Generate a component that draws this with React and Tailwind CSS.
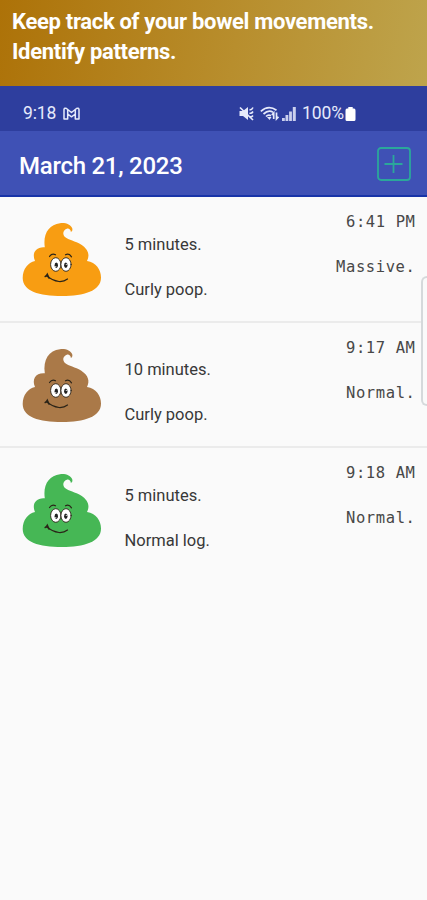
import React from 'react';

const entries = [
  { id: 1, color: '#f89d12', duration: '5 minutes.', type: 'Curly poop.', time: '6:41 PM', size: 'Massive.' },
  { id: 2, color: '#aa7948', duration: '10 minutes.', type: 'Curly poop.', time: '9:17 AM', size: 'Normal.' },
  { id: 3, color: '#46b755', duration: '5 minutes.', type: 'Normal log.', time: '9:18 AM', size: 'Normal.' },
];

const PoopIcon = ({ color }) => (
  <svg className="h-[75px] w-20 shrink-0" viewBox="0 0 80 75" fill="none">
    <path
      fill={color}
      d="M38 1.200C43.500 .5 49 2.500 50.300 6.500C50.700 8.500 50 9.500 48.900 10C48.800 7.500 46.500 6 44.800 6.800C40.500 8.500 40.500 12.500 43 15C46.500 18 53.500 19 59 22.500C66.500 27.500 68 33 65 39C74 40.500 79 47.500 79 55.500C79 69 62 74 40 74C17 74 .7 69 .7 56C.7 47 6 40.500 13 39C9.500 31 14 24.500 22.800 25.300C20.800 11.500 27 2.500 38 1.200Z"
    />
    <g stroke="#2b2418" strokeLinecap="round">
      <ellipse cx="33.800" cy="42.500" rx="5.200" ry="6.800" fill="#fff" strokeWidth="0.900" />
      <ellipse cx="44" cy="42.500" rx="5.100" ry="6.800" fill="#fff" strokeWidth="0.900" />
      <path strokeWidth="1.200" d="M27.500 34.500Q30 31 33.500 32.800M43.500 32.800Q47 31 49.500 34.800" />
      <path strokeWidth="1.200" d="M24.300 53.500Q30 58.500 37 59.500Q42 59.800 45.500 57" />
      <path strokeWidth="1.600" d="M23.200 54.500Q24.500 54 25.300 52.300L27 56" />
    </g>
    <ellipse cx="34.300" cy="43.300" rx="1.700" ry="2.800" fill="#222" />
    <ellipse cx="43.800" cy="43.300" rx="1.700" ry="2.800" fill="#222" />
    <circle cx="33.800" cy="44.500" r="0.600" fill="#fff" />
    <circle cx="44.300" cy="42.300" r="0.600" fill="#fff" />
  </svg>
);

const StatusBar = () => (
  <div className="flex h-[45px] items-center bg-[#2e3e9e] pl-[23px] pt-2.5 text-[17.5px] text-[#e6eafb]">
    <span className="w-[35px] tracking-[-0.1px]">9:18</span>
    <svg className="ml-[5px] h-[13px] w-[17px]" viewBox="0 0 17 13" fill="none" stroke="currentColor" strokeWidth="1.500" strokeLinejoin="round">
      <path d="M1 12V2.500Q1.500 .6 3.500 1.500L8.500 5.500L13.500 1.500Q15.500 .6 16 2.500V12H12.300V7L8.500 9.800L4.700 7V12ZM4.700 2.500V7M12.300 2.500V7" />
    </svg>
    <div className="ml-[159px] flex items-center">
      <svg className="h-[15px] w-[15px]" viewBox="0 0 15 15" fill="none" stroke="currentColor">
        <path fill="currentColor" stroke="none" d="M.5 5H4L9 1V14L4 10H.5Z" />
        <path strokeWidth="1.600" d="M10.500 3.500Q12.500 4.500 14 1.500M10.500 7Q12.500 8 14 5.500M11 10.500Q12.500 11.500 14 9.500" />
        <path strokeWidth="1.700" d="M1 1.500L14 14" />
      </svg>
      <svg className="ml-[6px] h-[15px] w-[19px]" viewBox="0 0 19 15" fill="none" stroke="currentColor" strokeWidth="1.700">
        <path d="M.8 5.300Q8.500-1.500 16.500 4.300M3.500 8Q8.500 3.500 13 6.300M6 10.500Q8.500 8 11 9.800" />
        <path fill="currentColor" stroke="none" d="M7 11H11.500L9.500 14Z" />
        <path d="M13.700 13V7L11.800 9M16.500 6.500V12.800L18.400 10.800" />
      </svg>
      <svg className="ml-[3px] h-3.5 w-3.5" viewBox="0 0 14 14" fill="currentColor">
        <path d="M0 11H2.800V14H0ZM3.500 8H6.300V14H3.500ZM7.100 4.500H9.900V14H7.100ZM10.800 0H13.800V14H10.800Z" opacity="0.850" />
      </svg>
      <span className="ml-[6px] w-[43px] whitespace-nowrap tracking-[-0.1px]">100%</span>
      <svg className="h-3.5 w-[11px]" viewBox="0 0 11 14" fill="#fff">
        <path d="M3.300 0H7.700V1.500H9Q10.500 1.500 10.500 3.500V12.500Q10.500 14 9 14H2Q.5 14 .5 12.500V3.500Q.5 1.500 2 1.500H3.300Z" />
      </svg>
    </div>
  </div>
);

const EntryRow = ({ entry }) => (
  <li className="flex h-[125.5px] border-b-2 border-[#ebebeb] pl-[22px] last:border-transparent">
    <div className="pt-[25px]">
      <PoopIcon color={entry.color} />
    </div>
    <div className="ml-[22.5px] flex flex-col gap-[21px] pt-[35.5px] text-[16.5px] leading-6 text-[#383838]">
      <span>{entry.duration}</span>
      <span>{entry.type}</span>
    </div>
    <div className="ml-auto flex flex-col items-end gap-[21px] pr-[11.5px] pt-[13px] font-['DejaVu_Sans_Mono',monospace] text-[15.5px] leading-6 tracking-[0.6px] text-[#484848]">
      <span>{entry.time}</span>
      <span>{entry.size}</span>
    </div>
  </li>
);

const App = () => {
  return (
    <div className="relative h-[900px] w-[427px] overflow-hidden bg-[#fafafa] font-[Roboto,sans-serif]">
      <div className="h-[86px] bg-linear-[100deg,#ad7208,#b88e2d_55%,#bea44c] pl-3 pt-[7px]">
        <h1 className="whitespace-nowrap text-[22px] font-bold leading-[30px] tracking-[-0.31px] text-white">
          Keep track of your bowel movements.
          <br />
          Identify patterns.
        </h1>
      </div>

      <StatusBar />

      <header className="flex h-[66px] items-center justify-between border-b-2 border-[#1834a8] bg-[#3f51b5] pl-[19px] pr-4 pt-0.5">
        <h2 className="pt-[3px] text-[24px] font-medium tracking-[-0.26px] text-white">March 21, 2023</h2>
        <button aria-label="Add entry">
          <svg className="h-[34px] w-[34px]" viewBox="0 0 34 34" fill="none" stroke="#2ba79b" strokeWidth="1.800">
            <rect x="1" y="1" width="32" height="32" rx="3" />
            <path d="M16.500 8V26M7.500 17H25.500" />
          </svg>
        </button>
      </header>

      <ul>
        {entries.map((entry) => (
          <EntryRow key={entry.id} entry={entry} />
        ))}
      </ul>

      {/* Edge panel handle, sits on top of the list */}
      <div className="absolute right-0 top-[276px] h-[130px] w-[6px] rounded-l-[6px] border-2 border-r-0 border-[#d5d9db] bg-[#fafafa]" />
    </div>
  );
};

export default App;
